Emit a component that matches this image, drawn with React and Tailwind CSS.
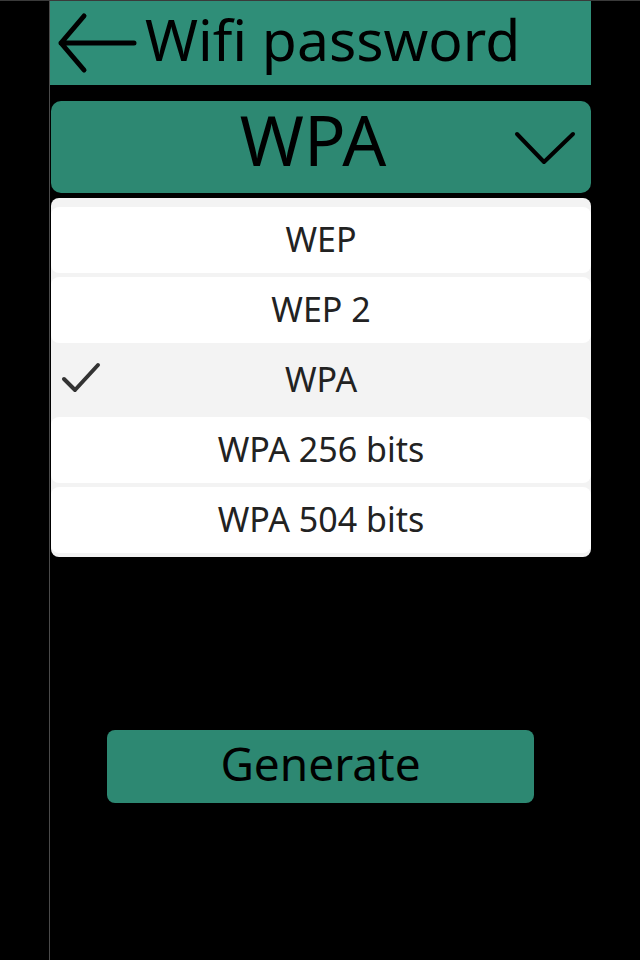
import React, { useState } from 'react';

const options = ['WEP', 'WEP 2', 'WPA', 'WPA 256 bits', 'WPA 504 bits'];

const App = () => {
    const [selected, setSelected] = useState('WPA');

    return (
        <div className="w-[640px] h-[960px] bg-black overflow-hidden font-['Noto_Sans',sans-serif] border-t border-[#3a3a3a]">
            <div className="ml-[49px] w-[542px] h-full border-l border-[#4a4a4a] flex flex-col">
                {/* header */}
                <div className="h-[84px] bg-[#2f8e78] flex items-center">
                    <svg width="84" height="64" viewBox="0 0 84 64" className="ml-[6px] shrink-0">
                        <path d="M28 5 L5 32 L28 59 M5 32 L78 32" fill="none" stroke="#000" strokeWidth="5" strokeLinecap="round" strokeLinejoin="round" />
                    </svg>
                    <span className="ml-[5px] text-[57px] leading-none text-black -mt-[8px]">Wifi password</span>
                </div>

                {/* select */}
                <button className="mt-[16px] ml-px h-[92px] rounded-[10px] bg-[#2d8872] relative flex items-center justify-center">
                    <span className="text-[69px] leading-none text-black -mt-[16px] -ml-[16px]">{selected}</span>
                    <svg width="64" height="40" viewBox="0 0 64 40" className="absolute right-[14px] top-[27px]">
                        <path d="M4 6 L31 34 L60 6" fill="none" stroke="#000" strokeWidth="4" strokeLinecap="round" strokeLinejoin="round" />
                    </svg>
                </button>

                {/* list */}
                <div className="mt-[5px] ml-px h-[359px] rounded-[8px] bg-[#f3f3f3] pt-[8px] pb-[6px]">
                    {options.map((o) => (
                        <div key={o} className="h-[69px] relative" onClick={() => setSelected(o)}>
                            <div className={`mt-px h-[66px] rounded-[8px] flex items-center justify-center ${o === selected ? 'bg-transparent' : 'bg-white'}`}>
                                <span className="text-[34px] leading-none text-[#222] -mt-[3px]">{o}</span>
                            </div>
                            {o === selected && (
                                <svg width="44" height="36" viewBox="0 0 44 36" className="absolute left-[9px] top-[13px]">
                                    <path d="M4 19 L15 30 L38 5" fill="none" stroke="#333" strokeWidth="4" strokeLinecap="round" strokeLinejoin="round" />
                                </svg>
                            )}
                        </div>
                    ))}
                </div>

                {/* generate */}
                <button className="mt-[173px] ml-[57px] w-[427px] h-[73px] rounded-[8px] bg-[#2d8872] flex items-center justify-center">
                    <span className="text-[46px] leading-none text-black -mt-[8px]">Generate</span>
                </button>
            </div>
        </div>
    );
};

export default App;
